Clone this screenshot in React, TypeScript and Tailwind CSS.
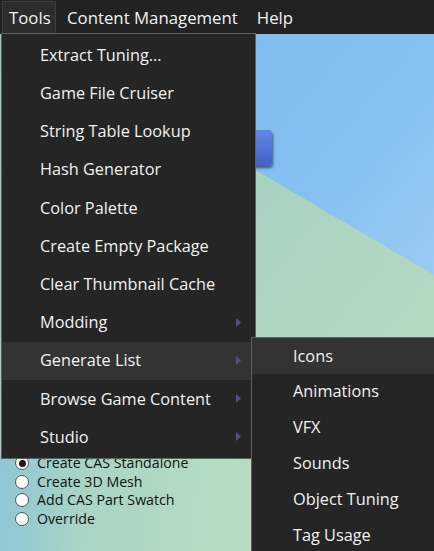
import React from 'react';

const font = { fontFamily: '"Open Sans", "Noto Sans", sans-serif' };

const toolsItems = [
  { label: 'Extract Tuning...' },
  { label: 'Game File Cruiser' },
  { label: 'String Table Lookup' },
  { label: 'Hash Generator' },
  { label: 'Color Palette' },
  { label: 'Create Empty Package' },
  { label: 'Clear Thumbnail Cache' },
  { label: 'Modding', sub: true },
  { label: 'Generate List', sub: true, active: true },
  { label: 'Browse Game Content', sub: true },
  { label: 'Studio', sub: true },
];

const listItems = ['Icons', 'Animations', 'VFX', 'Sounds', 'Object Tuning', 'Tag Usage'];

const radios = [
  { label: 'Create CAS Standalone', checked: true },
  { label: 'Create 3D Mesh' },
  { label: 'Add CAS Part Swatch' },
  { label: 'Override' },
];

function Arrow() {
  return (
    <svg width="6" height="9" viewBox="0 0 6 9" className="shrink-0">
      <path d="M0 0 L5 4.5 L0 9 Z" fill="#5d4b85" />
    </svg>
  );
}

function Backdrop() {
  return (
    <svg className="absolute inset-0" width="434" height="517" viewBox="0 0 434 517">
      <defs>
        <linearGradient id="sky" x1="0" y1="0" x2="1" y2="1">
          <stop offset="0" stopColor="#7abaef" />
          <stop offset="0.5" stopColor="#84c0f0" />
          <stop offset="1" stopColor="#b2d6f6" />
        </linearGradient>
        <linearGradient id="grass" x1="0" y1="0" x2="1" y2="1">
          <stop offset="0" stopColor="#8fcabf" />
          <stop offset="0.45" stopColor="#a8d2c0" />
          <stop offset="1" stopColor="#bcdec2" />
        </linearGradient>
        <linearGradient id="shade" x1="0" y1="0" x2="1" y2="0">
          <stop offset="0" stopColor="#84c2de" />
          <stop offset="0.3" stopColor="#a9d6c4" />
          <stop offset="1" stopColor="#bfe0c3" />
        </linearGradient>
      </defs>
      <rect x="0" y="0" width="434" height="517" fill="url(#sky)" />
      <polygon points="0,-14 434,241 434,517 0,517" fill="url(#grass)" />
      <polygon points="0,420 260,400 300,517 0,517" fill="url(#shade)" opacity="0.7" />
    </svg>
  );
}

export default function App() {
  return (
    <div className="relative w-[434px] h-[551px] overflow-hidden bg-[#222222] select-none" style={font}>
      {/* MENU BAR */}
      <div className="flex items-stretch h-[34px] bg-[#222222] text-[16.8px] text-[#f2f2f2] pt-px">
        <div className="ml-[2px] w-[54px] pl-[6px] flex items-center bg-[#2c2c2c] border border-[#3d3d3d] border-b-0">Tools</div>
        <div className="pl-[11px] pr-[10px] flex items-center">Content Management</div>
        <div className="px-[9px] flex items-center">Help</div>
      </div>

      {/* CANVAS */}
      <div className="relative h-[517px]">
        <Backdrop />
        <div className="relative flex flex-col">
          <div className="ml-[178px] mt-[96px] w-[94px] h-[36px] rounded-[4px] bg-gradient-to-b from-[#6586e8] to-[#3f62c8] shadow-[1px_2px_3px_rgba(0,0,0,0.55)]" />
          <div className="mt-[288px] ml-[15px] flex flex-col text-[14.2px] text-[#111111] leading-[18.5px]">
            {radios.map((r) => (
              <div key={r.label} className="flex items-center">
                <span className="w-[14px] h-[14px] rounded-full bg-white border border-[#555555] flex items-center justify-center">
                  {r.checked && <span className="w-[7px] h-[7px] rounded-full bg-[#1a1a1a]" />}
                </span>
                <span className="ml-[8px]">{r.label}</span>
              </div>
            ))}
          </div>
        </div>
      </div>

      {/* TOOLS DROPDOWN */}
      <div className="absolute left-[1px] top-[33px] w-[255px] bg-[#252525] border border-[#5f5f5f] pt-[2px] pb-[2px] text-[16.3px] text-[#f2f2f2]">
        {toolsItems.map((it) => (
          <div
            key={it.label}
            className={`h-[38.2px] flex items-center justify-between pl-[38px] pr-[13px] ${it.active ? 'bg-[#333333]' : ''}`}
          >
            <span>{it.label}</span>
            {it.sub && <Arrow />}
          </div>
        ))}
      </div>

      {/* GENERATE LIST SUBMENU */}
      <div className="absolute left-[251px] top-[337px] w-[200px] h-[230px] bg-[#252525] border border-[#5f5f5f] text-[16.3px] text-[#f2f2f2]">
        {listItems.map((l, i) => (
          <div key={l} className={`h-[35.8px] flex items-center pl-[41px] ${i === 0 ? 'bg-[#333333]' : ''}`}>
            {l}
          </div>
        ))}
      </div>
    </div>
  );
}
